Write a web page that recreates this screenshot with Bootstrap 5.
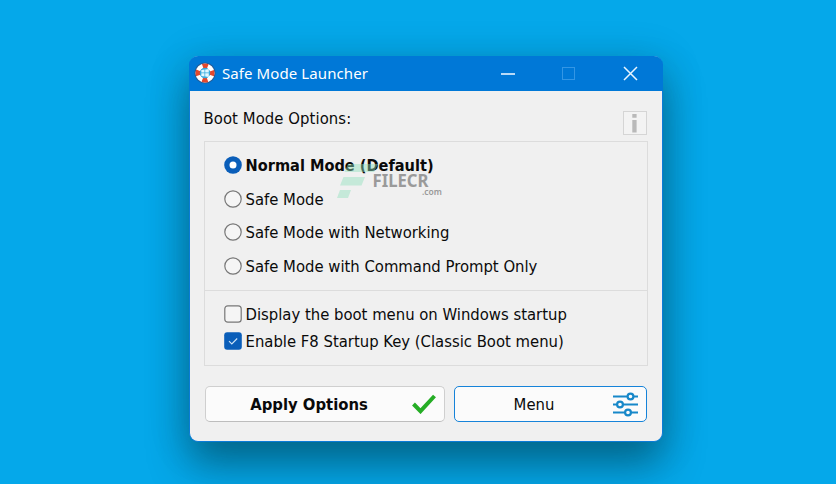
<!DOCTYPE html>
<html lang="en">
<head>
<meta charset="utf-8">
<meta name="viewport" content="width=device-width, initial-scale=1">
<title>Safe Mode Launcher</title>
<link href="https://cdn.jsdelivr.net/npm/bootstrap@5.3.0/dist/css/bootstrap.min.css" rel="stylesheet">
<style>
body{height:484px;overflow:hidden;background:#05a8ea;color:#0a0a0a;font-family:"DejaVu Sans Condensed","DejaVu Sans",sans-serif;font-stretch:condensed;font-size:16.5px;line-height:20px}
.launcher{width:474px;height:386px;margin:56px 0 0 189px;border-radius:9px;background:#f0f0f0;border:1px solid #0b7bd7;border-top:0;box-shadow:0 24px 40px rgba(0,50,60,.48),0 4px 40px rgba(0,50,60,.2)}
.titlebar{height:35px;margin:0 -1px;padding:0 3px 2px 5px;background:#0078d7;border-radius:9px 9px 0 0;color:#fff;font-family:"Noto Sans",sans-serif;font-stretch:normal}
.titlebar .caption{margin-left:6px;font-size:15px;letter-spacing:.09px}
.winctl{width:61px}
.heading-row{height:50px;padding:0 15px 0 13.5px}
.heading-row .label-text{padding-top:18px;letter-spacing:.08px}
.info{width:24px;height:24px;margin-top:20px}
.panel{width:444px;height:225px;margin-left:14px;border:1px solid #dcdcdc}
.modes{height:149px;border-bottom:1px solid #dcdcdc;padding:6px 0 0 18.5px}
.modes .opt{height:33.7px}
.checks{padding:9px 0 0 18.5px}
.checks .opt{height:27px}
.opt svg{flex:none;margin-right:4px}
.opt span{padding-top:2px}
.opt.fw-bold{font-size:16.2px}
.launch-btn{height:36px;padding:0;border-radius:5px;background:#fbfbfb;border:1px solid #cfcfcf;color:#0a0a0a;font-size:16.5px;line-height:20px}
.launch-btn span{padding-top:1px}
.apply{width:240px;border-bottom-color:#bdbdbd}
.menu{width:193px;border:1.5px solid #1683d9}
.actions{margin:20px 0 0 15px;gap:9px}
.watermark{left:336px;top:163px;pointer-events:none}
</style>
</head>
<body>
<main class="launcher">
<header class="titlebar d-flex align-items-center">
<svg width="22" height="22" viewBox="0 0 22 22"><circle cx="11" cy="11" r="10.6" fill="#245d99"/><circle cx="11" cy="11" r="7.2" fill="none" stroke="#fff" stroke-width="4.6"/><circle cx="11" cy="11" r="7.2" fill="none" stroke="#e4482d" stroke-width="4.6" stroke-dasharray="5.2 6.11" stroke-dashoffset="2.6"/><circle cx="11" cy="11" r="5.2" fill="#35a9df"/><path d="M7.3 8l3.2-.5v3.1H7.3zM11.2 7.4l3.6-.5v3.7h-3.6zM7.3 11.300h3.2v3.1l-3.2-.5zM11.2 11.300h3.6V15l-3.6-.5z" fill="#dff7ff"/></svg>
<span class="caption">Safe Mode Launcher</span>
<div class="d-flex ms-auto">
<svg class="winctl" height="20"><path d="M24 11h14" stroke="#e6f3ff" stroke-width="1.6"/></svg>
<svg class="winctl" height="20"><rect x="24.5" y="4.5" width="12" height="12" fill="none" stroke="#3396e5"/></svg>
<svg class="winctl" height="20"><path d="M25 4l13 13M38 4L25 17" stroke="#e9f5ff" stroke-width="1.5"/></svg>
</div>
</header>
<div class="heading-row d-flex justify-content-between">
<div class="label-text">Boot Mode Options:</div>
<svg class="info" viewBox="0 0 24 24"><rect x=".5" y=".5" width="23" height="23" fill="#f3f3f3" stroke="#d5d5d5"/><path d="M9.300 3h4.300v3.800H9.300zM9.300 9h4.300v12.500H9.300z" fill="#b9b9b9"/></svg>
</div>
<section class="panel">
<div class="modes">
<div class="opt d-flex align-items-center fw-bold"><svg width="18" height="18"><circle cx="9" cy="9" r="8.8" fill="#0a5eb9"/><circle cx="9" cy="9" r="3.5" fill="#fff"/></svg><span>Normal Mode (Default)</span></div>
<div class="opt d-flex align-items-center"><svg width="18" height="18"><circle cx="9" cy="9" r="8.2" fill="#f5f5f5" stroke="#777" stroke-width="1.2"/></svg><span>Safe Mode</span></div>
<div class="opt d-flex align-items-center"><svg width="18" height="18"><circle cx="9" cy="9" r="8.2" fill="#f5f5f5" stroke="#777" stroke-width="1.2"/></svg><span>Safe Mode with Networking</span></div>
<div class="opt d-flex align-items-center"><svg width="18" height="18"><circle cx="9" cy="9" r="8.2" fill="#f5f5f5" stroke="#777" stroke-width="1.2"/></svg><span>Safe Mode with Command Prompt Only</span></div>
</div>
<div class="checks">
<div class="opt d-flex align-items-center"><svg width="18" height="18"><rect x=".8" y=".8" width="16.4" height="16.4" rx="3" fill="#f5f5f5" stroke="#777" stroke-width="1.2"/></svg><span>Display the boot menu on Windows startup</span></div>
<div class="opt d-flex align-items-center"><svg width="18" height="18"><rect x=".2" y=".2" width="17.6" height="17.6" rx="3" fill="#0a5eb9"/><path d="M5 9.2l2.800 2.700 5.400-5.400" fill="none" stroke="#cfe4f7" stroke-width="1.100"/></svg><span>Enable F8 Startup Key (Classic Boot menu)</span></div>
</div>
</section>
<div class="actions d-flex">
<button class="btn launch-btn apply d-flex align-items-center fw-bold"><span class="flex-fill text-center">Apply Options</span><svg class="me-2" width="24" height="20"><path d="M1.5 10l7 7.2L22.5 2" fill="none" stroke="#25ad25" stroke-width="4"/></svg></button>
<button class="btn launch-btn menu d-flex align-items-center"><span class="flex-fill text-center">Menu</span><svg class="me-2" width="25" height="25" viewBox="0 0 25 25" fill="none" stroke="#1788c9" stroke-width="2.2"><path d="M0 4.500h14.500m6 0H25M0 12.500h4m6 0h15M0 20.500h12m6 0h7"/><circle cx="17.500" cy="4.500" r="2.900"/><circle cx="7" cy="12.500" r="2.900"/><circle cx="15" cy="20.500" r="2.900"/></svg></button>
</div>
</main>
<svg class="watermark position-absolute" width="110" height="38"><g fill="#91dfbd" opacity=".45"><path d="M12 1h30l-4 8H8.500zM7.500 14H29l-3.500 8.500H4zM4 27h11l-3 8H1z"/></g><g fill="#858585" opacity=".8" font-family="Noto Sans,sans-serif" font-stretch="normal"><text x="36.500" y="24" font-size="17.500" font-weight="700" textLength="56" lengthAdjust="spacingAndGlyphs">FILECR</text><text x="86" y="31.500" font-size="8.500" font-weight="600" textLength="20" lengthAdjust="spacingAndGlyphs">.com</text></g></svg>
<script src="https://cdn.jsdelivr.net/npm/bootstrap@5.3.0/dist/js/bootstrap.bundle.min.js"></script>
</body>
</html>
